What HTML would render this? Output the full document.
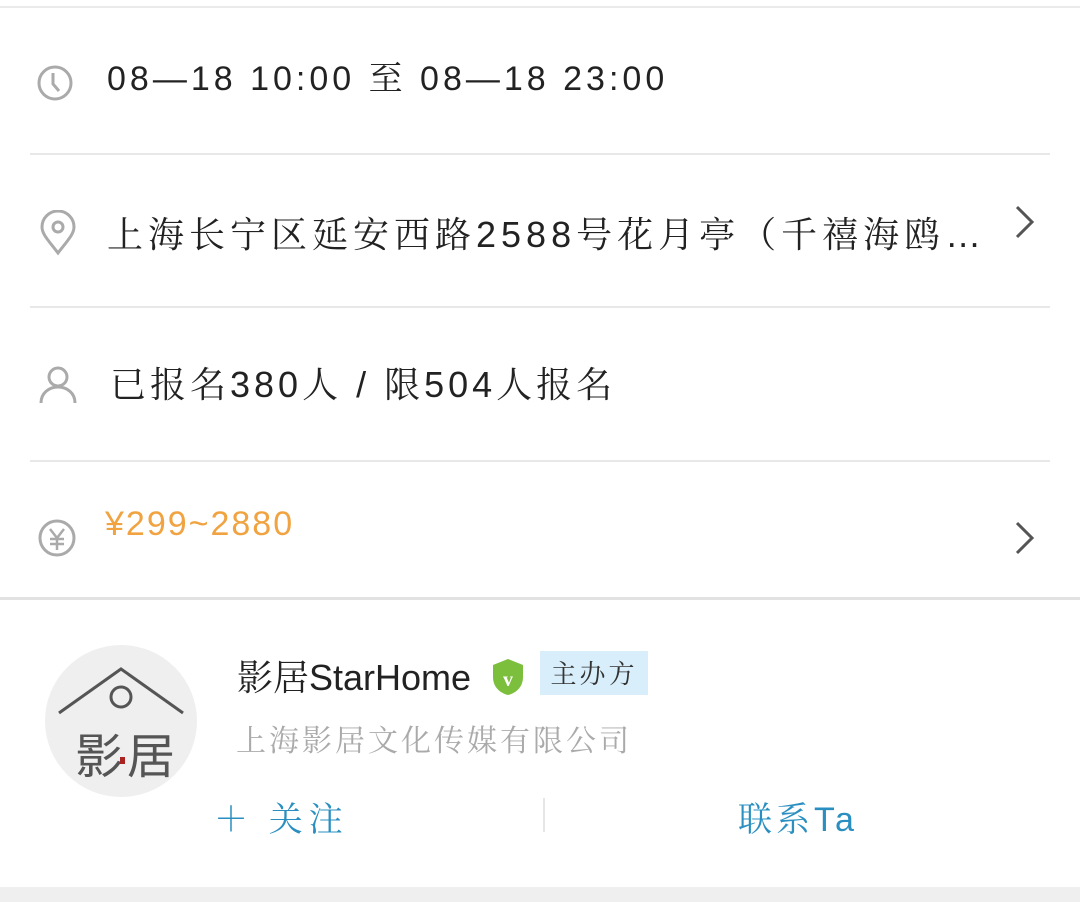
<!DOCTYPE html>
<html><head><meta charset="utf-8"><style>
body{margin:0;width:1080px;height:902px;background:#fff;position:relative;overflow:hidden;font-family:"Liberation Sans","Noto Serif CJK SC",serif}
.a{position:absolute;white-space:nowrap}
.sep{position:absolute;left:30px;right:30px;height:2px;background:#e8e8e8}
.t{font-size:35px;color:#222;font-family:"Liberation Sans","Noto Serif CJK SC",serif}
svg{position:absolute}
</style></head><body>
<div class="a" style="left:0;right:0;top:6px;height:2px;background:#eaeaea"></div>
<svg style="left:35px;top:63px" width="40" height="40" viewBox="0 0 40 40"><circle cx="20" cy="20" r="16" fill="none" stroke="#aaa" stroke-width="3"/><path d="M18 10v11l6 7" fill="none" stroke="#aaa" stroke-width="3"/></svg>
<div class="a t" style="left:107px;top:51px;font-size:34px;letter-spacing:4px">08—18 10:00 至 08—18 23:00</div>
<div class="sep" style="top:153px"></div>
<svg style="left:38px;top:210px" width="40" height="46" viewBox="0 0 40 46"><path d="M20 43C10 30 4 24 4 17a16 16 0 0 1 32 0c0 7-6 13-16 26z" fill="none" stroke="#aaa" stroke-width="3"/><circle cx="20" cy="17" r="5" fill="none" stroke="#aaa" stroke-width="3"/></svg>
<div class="a t" style="left:107px;top:207px;font-size:36px;letter-spacing:5px">上海长宁区延安西路2588号花月亭（千禧海鸥…</div>
<svg style="left:1012px;top:204px" width="26" height="36" viewBox="0 0 26 36"><path d="M5 3l15 15L5 33" fill="none" stroke="#555" stroke-width="3"/></svg>
<div class="sep" style="top:306px"></div>
<svg style="left:38px;top:365px" width="40" height="40" viewBox="0 0 40 40"><circle cx="20" cy="12" r="9" fill="none" stroke="#aaa" stroke-width="3"/><path d="M3 38c0-10 8-16 17-16s17 6 17 16" fill="none" stroke="#aaa" stroke-width="3"/></svg>
<div class="a t" style="left:110px;top:357px;font-size:36px;letter-spacing:4px">已报名380人 / 限504人报名</div>
<div class="sep" style="top:460px"></div>
<svg style="left:37px;top:518px" width="40" height="40" viewBox="0 0 40 40"><circle cx="20" cy="20" r="17" fill="none" stroke="#aaa" stroke-width="3"/><path d="M13 11l7 9 7-9M20 20v12M13 21h14M13 26h14" fill="none" stroke="#aaa" stroke-width="2.5"/></svg>
<div class="a t" style="left:105px;top:505px;font-size:34px;letter-spacing:2px;color:#f0a340">¥299~2880</div>
<svg style="left:1012px;top:520px" width="26" height="36" viewBox="0 0 26 36"><path d="M5 3l15 15L5 33" fill="none" stroke="#555" stroke-width="3"/></svg>
<div class="a" style="left:0;right:0;top:597px;height:3px;background:#e2e2e2"></div>
<div class="a" style="left:45px;top:645px;width:152px;height:152px;border-radius:50%;background:#efefef"></div>
<svg style="left:45px;top:645px" width="152" height="152" viewBox="0 0 152 152"><path d="M14 68L76 24l62 44" fill="none" stroke="#555" stroke-width="3"/><circle cx="76" cy="52" r="10" fill="none" stroke="#555" stroke-width="3"/><text x="30" y="128" font-size="48" fill="#555" font-family="Noto Sans CJK SC">影</text><text x="82" y="128" font-size="48" fill="#555" font-family="Noto Sans CJK SC">居</text><rect x="75" y="112" width="5" height="7" fill="#a22"/></svg>
<div class="a" style="left:237px;top:650px;font-size:36px;color:#222;font-family:'Liberation Sans Narrow','Liberation Sans','Noto Serif CJK SC',serif">影居StarHome</div>
<svg style="left:490px;top:657px" width="36" height="40" viewBox="0 0 36 40"><path d="M18 2L33 8v12c0 10-7 16-15 18C10 36 3 30 3 20V8z" fill="#7cbf3c"/><text x="18" y="29" font-size="20" fill="#fff" text-anchor="middle" font-family="Liberation Serif" font-weight="bold">v</text></svg>
<div class="a" style="left:540px;top:651px;width:108px;height:44px;background:#d8eefa;font-size:26px;color:#333;text-align:center;line-height:44px;font-family:'Noto Serif CJK SC',serif;letter-spacing:3px">主办方</div>
<div class="a" style="left:236px;top:716px;font-size:30px;color:#aaa;letter-spacing:3px;font-family:'Noto Serif CJK SC',serif">上海影居文化传媒有限公司</div>
<div class="a" style="left:214px;top:792px;font-size:34px;color:#2a8fc0;letter-spacing:6px;font-family:'Noto Serif CJK SC',serif">＋ 关注</div>
<div class="a" style="left:543px;top:798px;width:2px;height:34px;background:#e6e6e6"></div>
<div class="a" style="left:738px;top:792px;font-size:34px;color:#2a8fc0;letter-spacing:4px;font-family:'Liberation Sans','Noto Serif CJK SC',serif">联系Ta</div>
<div class="a" style="left:0;right:0;top:887px;height:15px;background:#efefef"></div>
</body></html>
